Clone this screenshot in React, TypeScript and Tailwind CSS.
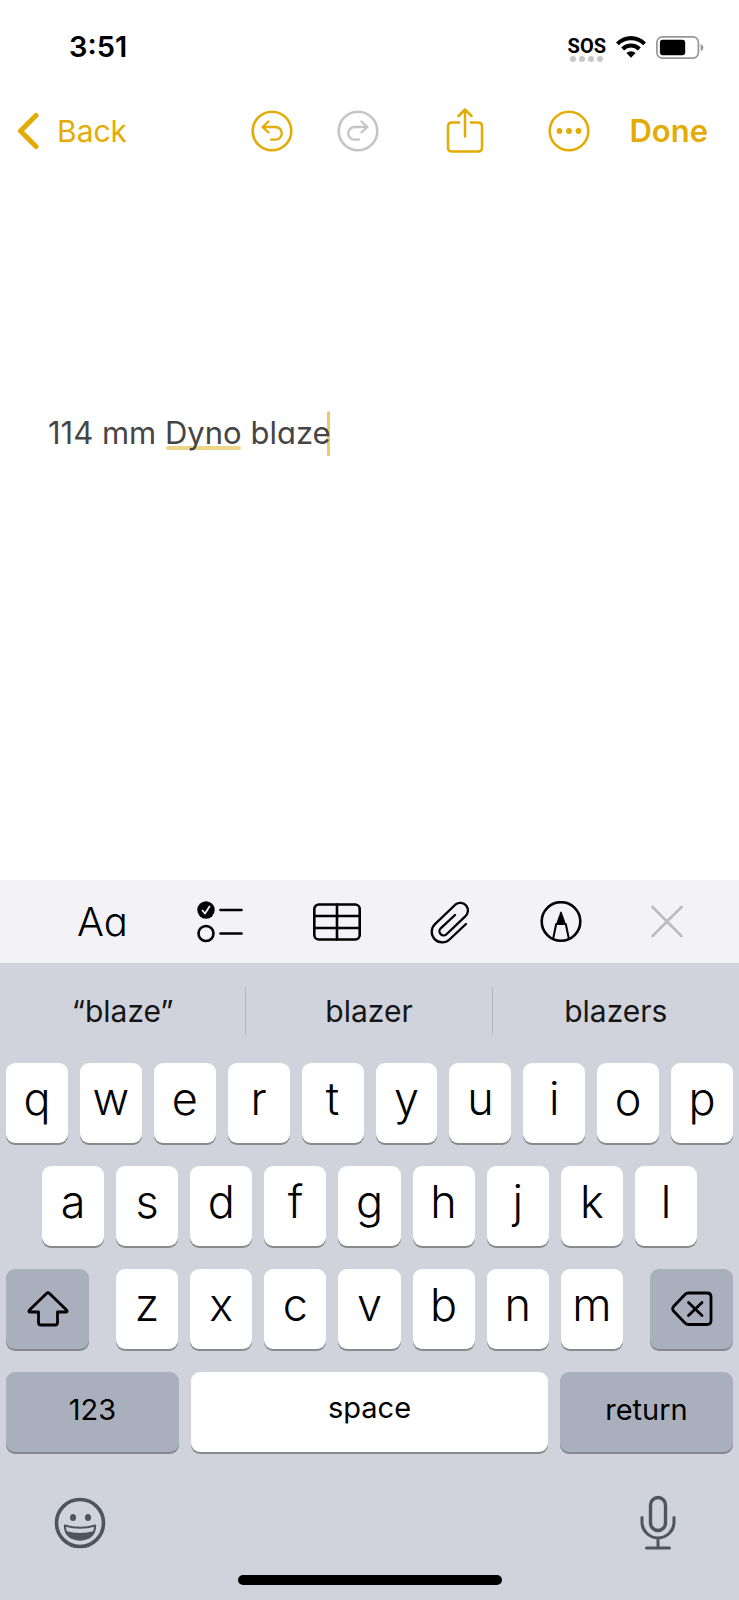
import { FC, ReactNode } from "react";

const suggestions = ["“blaze”", "blazer", "blazers"];
const topRow = ["q", "w", "e", "r", "t", "y", "u", "i", "o", "p"];
const middleRow = ["a", "s", "d", "f", "g", "h", "j", "k", "l"];
const lastRow = ["z", "x", "c", "v", "b", "n", "m"];

const Icon: FC<{
  width: number;
  height: number;
  stroke?: number;
  children: ReactNode;
}> = ({ width, height, stroke = 3, children }) => (
  <svg
    width={width}
    height={height}
    viewBox={`0 0 ${width} ${height}`}
    fill="none"
    stroke="currentColor"
    strokeWidth={stroke}
    strokeLinecap="round"
    strokeLinejoin="round"
    aria-hidden="true"
  >
    {children}
  </svg>
);

const StatusBar = () => (
  <div className="flex h-[94px] items-center justify-between pr-[35px] pl-[69px] text-black">
    <span className="text-[29px] leading-8 font-semibold">3:51</span>
    <div className="flex items-center gap-[10px]">
      <div className="flex flex-col items-center pt-1">
        <span className="font-['Roboto',sans-serif] text-[20px] leading-5 font-bold">
          SOS
        </span>
        <div className="flex gap-[3px]">
          {[0, 1, 2, 3].map((dot) => (
            <span key={dot} className="size-[6px] rounded-full bg-[#c8c8c8]" />
          ))}
        </div>
      </div>
      <svg width="30" height="22" viewBox="0 0 30 22" aria-label="Wi-Fi">
        <path d="M0 6.400a21 21 0 0 1 30 0l-2.900 2.900a17 17 0 0 0-24.200 0z" />
        <path d="M5.200 11.500a13.800 13.800 0 0 1 19.600 0l-2.900 2.900a9.800 9.800 0 0 0-13.800 0z" />
        <path d="M10.400 17.100a6.400 6.400 0 0 1 9.200 0L15 21.800z" />
      </svg>
      <svg width="48" height="23" viewBox="0 0 48 23" aria-label="Battery">
        <rect
          x="0.900"
          y="0.900"
          width="41.500"
          height="21.200"
          rx="5.500"
          fill="none"
          stroke="#969696"
          strokeWidth="1.700"
        />
        <rect x="3.900" y="3.800" width="25.300" height="15.500" rx="3" />
        <path d="M44.600 8q2.800 1 2.800 3.500t-2.800 3.500z" fill="#969696" />
      </svg>
    </div>
  </div>
);

const NavBar = () => (
  <nav className="flex h-[74px] items-center justify-between pr-[31px] pl-[17px] text-[#e3ab04]">
    <button className="flex items-center gap-[18px] text-[30px] leading-10">
      <Icon width={22} height={38} stroke={5}>
        <path d="M19 3.5L3.5 19L19 34.5" />
      </Icon>
      Back
    </button>
    <div className="flex items-center">
      <button aria-label="Undo">
        <Icon width={42} height={42} stroke={2.3}>
          <circle cx="21" cy="21" r="19.3" strokeWidth="2.6" />
          <path d="M17.5 11.500L11.5 17L17.5 22.500M12 17H24.5A6.300 6.300 0 0 1 24.5 29.600H20" />
        </Icon>
      </button>
      <button aria-label="Redo" disabled className="ml-[44px] text-[#c4c4c6]">
        <Icon width={42} height={42} stroke={2.3}>
          <circle cx="21" cy="21" r="19.3" strokeWidth="2.6" />
          <path d="M24.5 11.500L30.5 17L24.5 22.500M30 17H17.5A6.300 6.300 0 0 0 17.5 29.600H22" />
        </Icon>
      </button>
      <button aria-label="Share" className="ml-[67px]">
        <Icon width={38} height={46} stroke={2.5}>
          <path
            d="M14 14.500H6Q2 14.500 2 18.500V39.500Q2 43.500 6 43.500H32Q36 43.500 36 39.500V18.500Q36 14.500 32 14.500H24"
            strokeLinecap="butt"
          />
          <path d="M19 28.500V1.800M12.500 8L19 1.500L25.500 8" />
        </Icon>
      </button>
      <button aria-label="More" className="ml-[64px]">
        <Icon width={42} height={42}>
          <circle cx="21" cy="21" r="19.3" strokeWidth="2.6" />
          <g fill="currentColor" stroke="none">
            <circle cx="11.500" cy="21" r="2.900" />
            <circle cx="21" cy="21" r="2.900" />
            <circle cx="30.500" cy="21" r="2.900" />
          </g>
        </Icon>
      </button>
      <button className="ml-[39px] text-[31px] leading-10 font-semibold">
        Done
      </button>
    </div>
  </nav>
);

const Note = () => (
  <main className="min-h-[320px] flex-1 px-12 pt-[242px]">
    <div className="relative flex h-[46px] w-fit items-center">
      {/* spelling mark under "Dyno" */}
      <span className="absolute top-[36px] left-[118px] h-[4px] w-[75px] rounded-full bg-[#edd58a]" />
      <input
        aria-label="Note"
        defaultValue="114 mm Dyno blaze"
        className="relative field-sizing-content bg-transparent text-[31px] leading-10 text-[#454545] caret-[#eccb66] outline-none [font-feature-settings:'cv11']"
      />
      <span className="-ml-1 h-[45px] w-[3px] rounded-full bg-[#eccb66]" />
    </div>
  </main>
);

const FormatBar = () => (
  <div className="flex h-[83px] items-center justify-between bg-[#f2f2f7] pr-[56px] pl-[77px] text-black">
    <button
      aria-label="Text format"
      className="text-[40px] leading-10 font-light [font-feature-settings:'cv11']"
    >
      Aa
    </button>
    <button aria-label="Checklist">
      <Icon width={46} height={42} stroke={2.6}>
        <circle cx="9" cy="9" r="8.700" fill="currentColor" stroke="none" />
        <path
          d="M5.500 9.500L8 12.500L12.500 5.500"
          stroke="#f2f2f7"
          strokeWidth="1.800"
        />
        <circle cx="9" cy="32.500" r="7.500" />
        <path d="M23.500 9H44.500M23.500 32.500H44.500" />
      </Icon>
    </button>
    <button aria-label="Table">
      <Icon width={48} height={38} stroke={2.6}>
        <rect x="1.300" y="1.500" width="45.400" height="35" rx="4.500" />
        <path d="M1.500 13H46.500M1.500 25H46.500M24 1.500V36.500" />
      </Icon>
    </button>
    <button aria-label="Attach">
      <Icon width={40} height={44} stroke={2.3}>
        <path d="M25 15L10.700 28.300A4.100 4.100 0 0 0 16.500 34.200L35 16.600A7.500 7.500 0 0 0 25.500 4.500L5 24.200A10.500 10.500 0 0 0 19.500 39.500L36 24" />
      </Icon>
    </button>
    <button aria-label="Markup">
      <Icon width={42} height={42} stroke={2.6}>
        <circle cx="21" cy="20.500" r="19.300" />
        <path
          d="M13.200 37.500L16.200 23H25.800L28.800 37.500"
          strokeWidth="2"
          strokeLinecap="butt"
        />
        <path
          d="M20.300 11.200Q21 9.800 21.700 11.200L26.300 24H15.700Z"
          fill="currentColor"
          stroke="none"
        />
      </Icon>
    </button>
    <button aria-label="Close" className="text-[#bcbcc0]">
      <Icon width={32} height={34} stroke={2.6}>
        <path d="M1.500 2L30.500 31M30.500 2L1.500 31" />
      </Icon>
    </button>
  </div>
);

const LetterKey: FC<{ letter: string }> = ({ letter }) => (
  <button className="h-20 flex-1 rounded-[9px] bg-white pb-2 text-[45px] leading-[72px] font-[350] text-black shadow-[0_2px_0_#898a8d]">
    {letter}
  </button>
);

const Keyboard = () => (
  <section aria-label="Keyboard" className="bg-[#d0d3dc] text-black">
    <div className="flex h-24 items-center">
      {suggestions.map((word, index) => (
        <div key={word} className="flex flex-1 items-center">
          <button className="flex-1 text-center text-[30px] leading-[48px] text-[#151515]">
            {word}
          </button>
          {index < suggestions.length - 1 && (
            <span className="h-12 w-px bg-[#b4b7bf]" />
          )}
        </div>
      ))}
    </div>
    <div className="flex flex-col gap-[23px] pt-1">
      <div className="flex gap-3 px-[6px]">
        {topRow.map((letter) => (
          <LetterKey key={letter} letter={letter} />
        ))}
      </div>
      <div className="flex gap-3 px-[42px]">
        {middleRow.map((letter) => (
          <LetterKey key={letter} letter={letter} />
        ))}
      </div>
      <div className="flex gap-[27px] px-[6px]">
        <button
          aria-label="Shift"
          className="flex h-20 w-[83px] items-center justify-center rounded-[9px] bg-[#a9afbc] shadow-[0_2px_0_#85888f]"
        >
          <Icon width={42} height={36} stroke={2.8}>
            <path d="M19.500 2.500Q21 1 22.500 2.500L39.500 19Q41 21 38.500 21H30.500V31.500Q30.500 34 28 34H14Q11.500 34 11.500 31.500V21H3.500Q1 21 2.500 19Z" />
          </Icon>
        </button>
        <div className="flex flex-1 gap-3">
          {lastRow.map((letter) => (
            <LetterKey key={letter} letter={letter} />
          ))}
        </div>
        <button
          aria-label="Delete"
          className="flex h-20 w-[83px] items-center justify-center rounded-[9px] bg-[#a9afbc] shadow-[0_2px_0_#85888f]"
        >
          <Icon width={42} height={36} stroke={2.8}>
            <path d="M17.500 2H36Q40 2 40 6V29.500Q40 33.500 36 33.500H17.500Q15.500 33.500 14 32L2.500 20Q0.800 17.800 2.500 15.500L14 3.500Q15.500 2 17.500 2Z" />
            <path d="M17.500 11.500L31 24.500M31 11.500L17.500 24.500" />
          </Icon>
        </button>
      </div>
      <div className="flex gap-3 px-[6px] text-[29px] leading-10">
        <button className="h-20 w-[173px] rounded-[9px] bg-[#a9afbc] pb-1 shadow-[0_2px_0_#85888f]">
          123
        </button>
        <button className="h-20 flex-1 rounded-[9px] bg-white pb-2 shadow-[0_2px_0_#898a8d]">
          space
        </button>
        <button className="h-20 w-[173px] rounded-[9px] bg-[#a9afbc] pb-1 shadow-[0_2px_0_#85888f]">
          return
        </button>
      </div>
    </div>
    <div className="flex items-center justify-between pt-[43px] pr-[62px] pl-[54px] text-[#50545d]">
      <button aria-label="Emoji">
        <Icon width={52} height={52} stroke={3.6}>
          <circle cx="26" cy="26" r="23.500" />
          <g fill="currentColor" stroke="none">
            <ellipse cx="19" cy="20.500" rx="3" ry="3.500" />
            <ellipse cx="34" cy="20.500" rx="3" ry="3.500" />
            <path d="M12 34Q26 38 40 34Q35 43.500 26 43.500Q17 43.500 12 34Z" />
          </g>
          <path
            d="M10.800 28.500Q26 33 41.200 28.500Q41 42 26 42.500Q11 42 10.800 28.500Z"
            strokeWidth="2"
          />
        </Icon>
      </button>
      <button aria-label="Dictate">
        <Icon width={38} height={56} stroke={3}>
          <rect x="11.500" y="2.500" width="15" height="33" rx="7.500" strokeWidth="3.400" />
          <path d="M3 22.500V27A16 16 0 0 0 35 27V22.500M19 43.500V53M7.500 53H30.500" />
        </Icon>
      </button>
    </div>
    <div className="flex justify-center pt-6 pb-[15px]">
      <span className="h-[10px] w-[264px] rounded-full bg-black" />
    </div>
  </section>
);

export default function App() {
  return (
    <div className="flex min-h-screen flex-col bg-white font-['Inter',sans-serif]">
      <StatusBar />
      <NavBar />
      <Note />
      <FormatBar />
      <Keyboard />
    </div>
  );
}
